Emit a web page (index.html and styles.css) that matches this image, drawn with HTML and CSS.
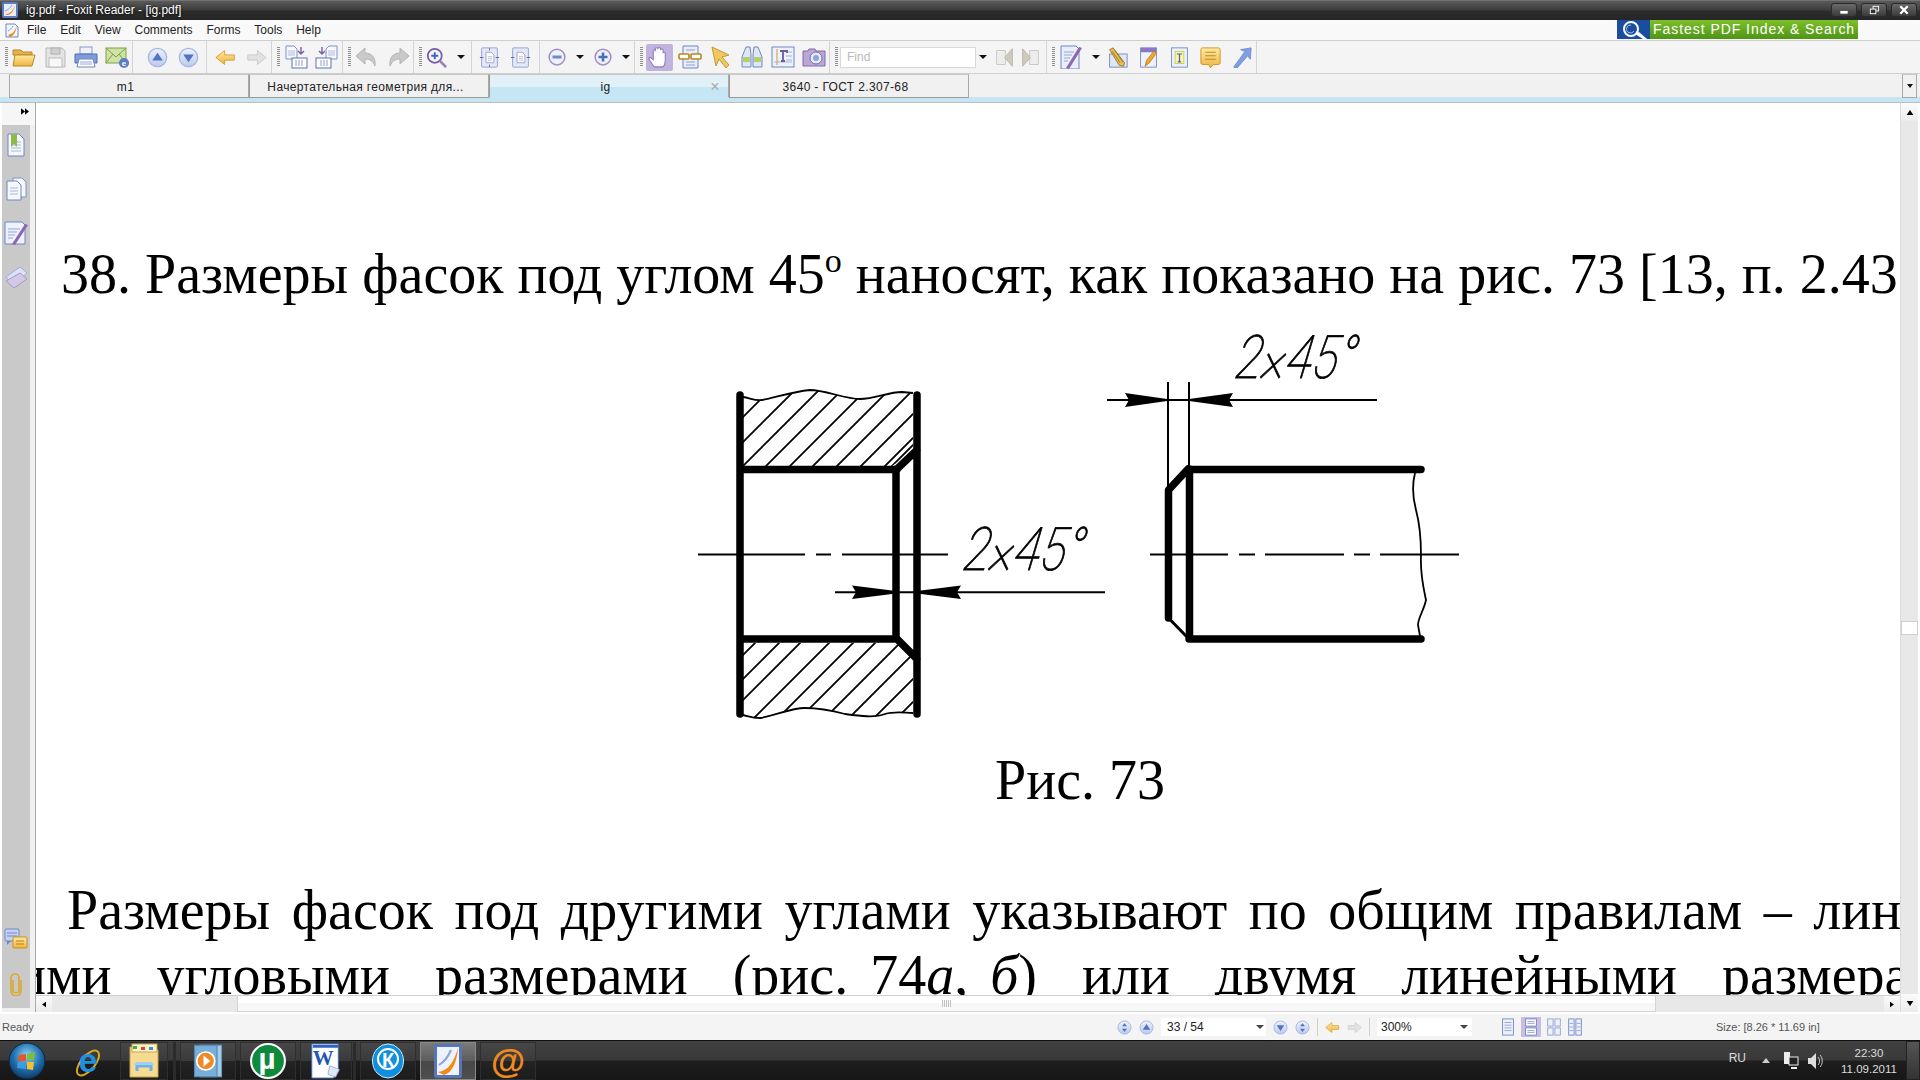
FILE: index.html
```html
<!DOCTYPE html>
<html lang="ru">
<head>
<meta charset="utf-8">
<title>ig.pdf - Foxit Reader - [ig.pdf]</title>
<link rel="stylesheet" href="styles.css">
</head>
<body>
<svg class="defs" width="0" height="0" aria-hidden="true">
  <defs>
    <linearGradient id="gBlue" x1="0" y1="0" x2="0" y2="1"><stop offset="0" stop-color="#eef2fb"/><stop offset="1" stop-color="#bcc9ee"/></linearGradient>
    <linearGradient id="gYel" x1="0" y1="0" x2="0" y2="1"><stop offset="0" stop-color="#ffe9a0"/><stop offset="1" stop-color="#eeb440"/></linearGradient>
    <radialGradient id="gOrb" cx=".5" cy=".35" r=".7"><stop offset="0" stop-color="#8fd4f5"/><stop offset=".55" stop-color="#1f6fae"/><stop offset="1" stop-color="#0a2f55"/></radialGradient>
    <g id="doc"><path d="M4 1h11l5 5v17H4z" fill="#f6f8fe" stroke="#6f86c4"/><path d="M7 9h10M7 12h10M7 15h10M7 18h10" stroke="#a9b6dc"/></g>
    <g id="round"><circle cx="12" cy="12" r="10.5" fill="url(#gBlue)" stroke="#a9b8e6" stroke-width="1.5"/></g>
    <g id="up"><use href="#round"/><path d="M12 6.5l6 9H6z" fill="#4f75bf"/></g>
    <g id="down"><use href="#round"/><path d="M12 17.5l6-9H6z" fill="#4f75bf"/></g>
    <g id="first"><use href="#round"/><path d="M12 5l4 5H8zM12 19l4-5H8z" fill="#4f75bf"/></g>
    <g id="fit"><rect x="3" y="1" width="18" height="22" rx="1" fill="#e4e9f8" stroke="#8b9bd0"/><path d="M8 6h6l3 3v9H8z" fill="#fff" stroke="#8f9fc9"/><path d="M10 11h5M10 13h5M10 15h5" stroke="#b5bfdc"/><path d="M1 12h4M23 12h-4" stroke="#7a5ca8" stroke-width="1.4"/></g>
    <g id="lefty"><path d="M1 12l10-8v5h11v6H11v5z"/></g>
    <g id="pgarrow"><path d="M2 1h8l3 3v10H2z" fill="#f6f8fe" stroke="#7e92c8"/><path d="M4 6h7M4 8h7M4 10h7" stroke="#b3bfe0"/><rect x="8" y="13" width="15" height="10" fill="#fff" stroke="#5b72b5"/><path d="M12 15v6M15 15v6M18 15v6" stroke="#8c9cc9"/></g>
  </defs>
</svg>

<div class="app">
  <header class="titlebar">
    <svg class="ti-logo" viewBox="0 0 16 16"><rect width="16" height="16" rx="2" fill="#5d7ac4"/><rect x="2" y="2" width="12" height="12" fill="#e8eefc"/><path d="M3 12c5 0 8-3 10-9-1 6-4 10-8 10z" fill="#f08a12"/><path d="M3 9c3-1 5-3 7-6" stroke="#8aa3dc" fill="none"/></svg>
    <span class="ti-text">ig.pdf - Foxit Reader - [ig.pdf]</span>
    <div class="winbtns">
      <span class="winbtn"><svg viewBox="0 0 26 12"><rect x="9" y="7" width="8" height="3" fill="#fff"/></svg></span>
      <span class="winbtn"><svg viewBox="0 0 26 12"><rect x="12" y="2" width="6" height="5" fill="none" stroke="#fff"/><rect x="9" y="5" width="6" height="5" fill="#333" stroke="#fff"/></svg></span>
      <span class="winbtn"><svg viewBox="0 0 26 12"><path d="M9 2l8 8M17 2l-8 8" stroke="#fff" stroke-width="2.4"/></svg></span>
    </div>
  </header>

  <nav class="menubar">
    <svg class="mn-logo" viewBox="0 0 14 16"><path d="M1 2h9l3 3v10H1z" fill="#f2f5fd" stroke="#6f86c4"/><path d="M3 13c5-1 7-4 9-10-1 6-3 11-7 12z" fill="#f08a12"/><path d="M3 9c2-1 4-3 5-5" stroke="#8aa3dc" fill="none"/></svg>
    <span class="mn">File</span><span class="mn">Edit</span><span class="mn">View</span><span class="mn">Comments</span><span class="mn">Forms</span><span class="mn">Tools</span><span class="mn">Help</span>
    <div class="banner">
      <span class="bn-ic"><svg viewBox="0 0 33 19"><rect width="33" height="19" fill="#1a4da0"/><circle cx="14" cy="9" r="7" fill="none" stroke="#fff" stroke-width="2"/><path d="M18 14l8 5h4l-8-7z" fill="#fff"/><path d="M14 5a4 4 0 1 0 3 6" fill="none" stroke="#9cc4f2"/></svg></span>
      <span class="bn-tx">Fastest PDF Index &amp; Search</span>
    </div>
  </nav>

  <div class="toolbar">
    <div class="grp g1"><i class="grip"></i>
      <svg class="ic" viewBox="0 0 24 24"><path d="M1 5h8l2 2h9v3H1z" fill="#e3b24a" stroke="#b78a2a"/><path d="M3 10h20l-3 11H1z" fill="url(#gYel)" stroke="#b78a2a"/></svg>
      <svg class="ic" viewBox="0 0 24 24"><path d="M3 3h16l3 3v16H3z" fill="#e4e4e4" stroke="#b9b9b9"/><rect x="8" y="3" width="9" height="6" fill="#cfcfcf" stroke="#b0b0b0"/><rect x="6" y="13" width="13" height="9" fill="#f8f8f8" stroke="#bdbdbd"/></svg>
      <svg class="ic" viewBox="0 0 24 24"><rect x="6" y="2" width="12" height="7" fill="#eef1fa" stroke="#8898c8"/><path d="M1 9h22v9H1z" fill="#7f9bd8" stroke="#4e6fb5"/><path d="M5 14h14l2 8H3z" fill="#fff" stroke="#6f86c4"/><path d="M6 17h12M6 19h12" stroke="#9aa9d2"/></svg>
      <svg class="ic" viewBox="0 0 24 24"><rect x="1" y="3" width="20" height="15" fill="#cfe3a6" stroke="#7fa044"/><path d="M1 3l10 9 10-9M1 18l7-9M21 18l-7-9" fill="none" stroke="#7fa044"/><circle cx="19" cy="18" r="5" fill="#5b7cc8"/><text class="ic-e" x="19" y="21">e</text></svg>
    </div>
    <div class="grp g2">
      <svg class="ic ic21" viewBox="0 0 24 24"><use href="#up"/></svg>
      <svg class="ic ic21" viewBox="0 0 24 24"><use href="#down"/></svg>
    </div>
    <div class="grp g3">
      <svg class="ic ic21" viewBox="0 0 24 24"><use href="#lefty" fill="url(#gYel)" stroke="#d19b2e"/></svg>
      <svg class="ic ic21 flip" viewBox="0 0 24 24"><use href="#lefty" fill="#e2e2e2" stroke="#c8c8c8"/></svg>
    </div>
    <div class="grp g4"><i class="grip"></i>
      <svg class="ic" viewBox="0 0 24 24"><use href="#pgarrow"/><path d="M17 2v7M14 6l3 3 3-3" fill="none" stroke="#7a5ca8" stroke-width="1.4"/></svg>
      <svg class="ic flip" viewBox="0 0 24 24"><use href="#pgarrow"/><path d="M17 2v7M14 6l3 3 3-3" fill="none" stroke="#7a5ca8" stroke-width="1.4"/></svg>
    </div>
    <div class="grp g5"><i class="grip"></i>
      <svg class="ic" viewBox="0 0 24 24"><path d="M10 3L1 11l9 8v-5c5 0 8 2 10 7 1-8-3-13-10-13z" fill="#c9c9c9" stroke="#b4b4b4"/></svg>
      <svg class="ic flip" viewBox="0 0 24 24"><path d="M10 3L1 11l9 8v-5c5 0 8 2 10 7 1-8-3-13-10-13z" fill="#c9c9c9" stroke="#b4b4b4"/></svg>
    </div>
    <div class="grp g6"><i class="grip"></i>
      <svg class="ic ic21" viewBox="0 0 24 24"><circle cx="10" cy="10" r="8" fill="#f4f6fd" stroke="#7a5ca8" stroke-width="2"/><path d="M6 10h8M10 6v8" stroke="#3f66b5" stroke-width="2.2"/><path d="M16 16l7 7" stroke="#9a7fc2" stroke-width="3"/></svg>
      <i class="drop"></i>
    </div>
    <div class="grp g7">
      <svg class="ic ic21" viewBox="0 0 24 24"><use href="#fit"/><path d="M12 1v3M12 23v-3" stroke="#7a5ca8"/></svg>
      <svg class="ic ic21" viewBox="0 0 24 24"><use href="#fit"/></svg>
    </div>
    <div class="grp g8">
      <svg class="ic ic18" viewBox="0 0 24 24"><circle cx="12" cy="12" r="10.5" fill="#eef0fa" stroke="#a38cc8" stroke-width="2"/><rect x="6" y="10" width="12" height="4" fill="#6a8ac8"/></svg><i class="drop"></i>
      <svg class="ic ic18" viewBox="0 0 24 24"><circle cx="12" cy="12" r="10.5" fill="#eef0fa" stroke="#a38cc8" stroke-width="2"/><path d="M6 12h12M12 6v12" stroke="#466fbd" stroke-width="3.4"/></svg><i class="drop"></i>
    </div>
    <div class="grp g9"><i class="grip"></i>
      <span class="hand"><svg viewBox="0 0 24 24"><path d="M7 21c-2-3-5-6-5-8s2-1 4 1V6c0-1.800 2-1.800 2 0V4c0-1.800 2.500-1.800 2.500 0V3.500c0-1.600 2.500-1.600 2.500 0V5c0-1.600 2.500-1.600 2.500 0v3c0-1.500 2-1.500 2 0v7c0 3-1 5-2 6z" fill="#fff" stroke="#8a7ab5"/></svg></span>
      <svg class="ic" viewBox="0 0 24 24"><path d="M5 1h15v22H5z" fill="#e9eefb" stroke="#6f86c4"/><path d="M8 5h9M8 17h9M8 20h9" stroke="#8fa0d0"/><rect x="1" y="9" width="10" height="5" rx="1" fill="#fff" stroke="#b8861c" stroke-width="1.6"/><rect x="13" y="9" width="10" height="5" rx="1" fill="#fff" stroke="#b8861c" stroke-width="1.6"/></svg>
      <svg class="ic" viewBox="0 0 24 24"><path d="M3 2l17 8-7 2 7 8-3 3-7-9-3 7z" fill="#efc860" stroke="#c49a34"/></svg>
      <svg class="ic" viewBox="0 0 24 24"><path d="M6 2h4l1 8v12H2V12z" fill="#dfe7f7" stroke="#6f86c4"/><path d="M14 2h4l4 10v10h-9V10z" fill="#dfe7f7" stroke="#6f86c4"/><rect x="3" y="12" width="7" height="5" fill="#b5cf6a"/><rect x="14" y="12" width="7" height="5" fill="#b5cf6a"/></svg>
      <svg class="ic" viewBox="0 0 24 24"><rect x="1" y="2" width="22" height="20" fill="#eef2fc" stroke="#6f86c4"/><path d="M15 7h6M15 11h6M15 15h6M3 17h18" stroke="#a5b3dc"/><path d="M9 6h7v2M12 6v10M10 16h4" fill="none" stroke="#6a5aa8" stroke-width="1.8"/><path d="M6 4v16" stroke="#c89f2a"/></svg>
      <svg class="ic" viewBox="0 0 24 24"><path d="M1 6h5l1-2h6l1 2h9v15H1z" fill="#b9a7d8" stroke="#7f6aa9"/><circle cx="14" cy="13" r="6" fill="#e6ecfb" stroke="#7f6aa9"/><circle cx="14" cy="13" r="3" fill="#8aa5e0"/></svg>
    </div>
    <div class="grp g10"><i class="grip"></i>
      <span class="findbox">Find</span><i class="drop"></i>
      <svg class="ic ic21" viewBox="0 0 24 24"><path d="M3 4h10v16H3z" fill="#ededed" stroke="#c4c4c4"/><path d="M21 2v20l-9-10z" fill="#cfcabb" stroke="#b8b4a6"/></svg>
      <svg class="ic ic21 flip" viewBox="0 0 24 24"><path d="M3 4h10v16H3z" fill="#ededed" stroke="#c4c4c4"/><path d="M21 2v20l-9-10z" fill="#cfcabb" stroke="#b8b4a6"/></svg>
    </div>
    <div class="grp g11"><i class="grip"></i>
      <svg class="ic" viewBox="0 0 24 24"><path d="M2 1h15l3 3v20H2z" fill="#e9eefb" stroke="#6f86c4"/><path d="M5 7h10M5 10h8M5 13h6M5 16h4" stroke="#94a5d4"/><path d="M7 23L20 2l3 1L10 24z" fill="#8c68b0"/></svg><i class="drop"></i>
      <svg class="ic ic21" viewBox="0 0 24 24"><rect x="3" y="8" width="20" height="15" fill="#dfe6f8" stroke="#6f86c4"/><path d="M3 3l4-2 13 17-1 4-5-1z" fill="#e6bc55" stroke="#9b7320"/><path d="M6 5l9 13M9 4l9 13" stroke="#9b7320"/></svg>
      <svg class="ic ic21" viewBox="0 0 24 24"><rect x="3" y="1" width="18" height="22" fill="#eef2fc" stroke="#6f86c4"/><rect x="3" y="1" width="18" height="5" fill="#8a78c0"/><path d="M8 22l2-7 8-10 3 2-8 11z" fill="#f0a830" stroke="#c47c10"/></svg>
      <svg class="ic ic21" viewBox="0 0 24 24"><rect x="3" y="1" width="18" height="22" fill="#eef2fc" stroke="#6f86c4"/><rect x="7" y="5" width="10" height="14" fill="#f7f7a8" stroke="#c8c858"/><path d="M9 8h6M12 8v9M10 17h4" stroke="#5a5ab0" stroke-width="1.4" fill="none"/></svg>
      <svg class="ic ic21" viewBox="0 0 24 24"><path d="M3 1h18a2 2 0 0 1 2 2v15a2 2 0 0 1-2 2h-6l-3 4-2-4H3a2 2 0 0 1-2-2V3a2 2 0 0 1 2-2z" fill="url(#gYel)" stroke="#c8911c"/><path d="M6 6h12M6 10h12M6 14h12" stroke="#b5811a"/></svg>
      <svg class="ic ic21" viewBox="0 0 24 24"><path d="M3 23L16 5l-5-2 12-2-1 13-3-4L7 24z" fill="#7e9fe2" stroke="#6a8bd2"/></svg>
    </div>
  </div>

  <div class="tabbar">
    <div class="tab">m1</div>
    <div class="tab">Начертательная геометрия для...</div>
    <div class="tab tab-on"><span>ig</span><i class="tab-x">×</i></div>
    <div class="tab">3640 - ГОСТ 2.307-68</div>
    <div class="tab-menu"><i class="drop"></i></div>
  </div>

  <main class="main">
    <aside class="sidebar">
      <div class="sb-top"><svg class="sb-ff" viewBox="0 0 10 8"><path d="M0 0l5 4-5 4zM5 0l5 4-5 4z"/></svg></div>
      <div class="sb-icons">
        <svg class="sb-ic" viewBox="0 0 24 24"><use href="#doc"/><path d="M7 1h6v13l-3-3-3 3z" fill="#8cbb4a"/></svg>
        <svg class="sb-ic" viewBox="0 0 24 24"><path d="M9 1h9l4 4v15H9z" fill="#f6f8fe" stroke="#7e92c8"/><path d="M3 4h10l4 4v15H3z" fill="#f6f8fe" stroke="#6f86c4"/><path d="M6 11h8M6 14h8M6 17h8" stroke="#a9b6dc"/></svg>
        <svg class="sb-ic" viewBox="0 0 24 24"><path d="M1 1h17l3 3v19H1z" fill="#eef2fc" stroke="#6f86c4"/><path d="M4 8h12M4 11h9M4 14h7M4 17h5" stroke="#94a5d4"/><path d="M8 23L21 3l3 1L11 24z" fill="#8c68b0"/></svg>
        <svg class="sb-ic" viewBox="0 0 24 24"><path d="M2 12L16 2l7 6L10 20z" fill="#dbe3f7" stroke="#9fb0dc"/><path d="M2 16l14-8 7 6-13 9z" fill="#d3c8e6" stroke="#a896cc"/></svg>
        <span class="sb-gap"></span>
        <svg class="sb-ic" viewBox="0 0 24 24"><rect x="1" y="1" width="14" height="12" rx="1" fill="#c4d2f2" stroke="#6f86c4"/><path d="M3 5h10M3 8h10" stroke="#6f86c4"/><path d="M3 13v4l4-4z" fill="#6f86c4"/><rect x="9" y="9" width="14" height="11" rx="1" fill="url(#gYel)" stroke="#c8911c"/><path d="M12 13h8M12 16h8" stroke="#b5811a"/></svg>
        <svg class="sb-ic" viewBox="0 0 24 24"><path d="M9 8v10a3 3 0 0 0 6 0V6a4 4 0 0 0-8 0v13a5 5 0 0 0 10 0V8" fill="none" stroke="#d9a92c" stroke-width="1.6"/></svg>
      </div>
    </aside>

    <div class="center">
      <section class="page">
        <p class="ln l1">38. Размеры фасок под углом 45<sup>о</sup> наносят, как показано на рис. 73 [13, п. 2.43</p>
        <svg class="fig" viewBox="680 320 800 410">
          <defs>
            <clipPath id="hTop"><path d="M743 397C750 398 755 401 762 400C775 398 790 392 810 390C825 390 845 399 860 399C875 399 888 392 902 392L913 393V452L892 466H743Z"/></clipPath>
            <clipPath id="hBot"><path d="M743 643H897L913 660V713C905 713 895 711 885 714C875 718 860 716 845 714C830 710 820 708 805 708C790 708 775 716 760 718C752 718 748 716 743 715Z"/></clipPath>
          </defs>
          <g class="thin" clip-path="url(#hTop)">
            <path d="M690 470L780 380M715 470L805 380M739 470L829 380M762 470L852 380M786 470L876 380M809 470L899 380M833 470L923 380M857 470L947 380M881 470L971 380M888 470L978 380"/>
          </g>
          <g class="thin" clip-path="url(#hBot)">
            <path d="M668 730L758 640M692 730L782 640M713 730L803 640M742 730L832 640M766 730L856 640M788 730L878 640M813 730L903 640M837 730L927 640M862 730L952 640M885 730L975 640"/>
          </g>
          <path class="wave" d="M743 397C750 398 755 401 762 400C775 398 790 392 810 390C825 390 845 399 860 399C875 399 888 392 902 392L913 393"/>
          <path class="wave" d="M743 715C748 716 752 718 760 718C775 716 790 708 805 708C820 708 830 710 845 714C860 716 875 718 885 714C895 711 905 713 913 713"/>
          <path class="thick" d="M740 395V714M917 395V714M740 469.500H897M740 639H897M896 469V639M897 469L917 450M897 639L917 659"/>
          <path class="center-l" d="M698 554.500H805M816 554.500H831M842 554.500H948"/>
          <path class="thin dim" d="M835 592.300H1105"/>
          <path d="M896 591L852 585.500L856 592.300L852 599L896 593.500ZM917 591L961 585.500L957 592.300L961 599L917 593.500Z"/>
          <text class="dimtx" x="960" y="570" textLength="120" lengthAdjust="spacingAndGlyphs">2×45°</text>

          <path class="thin dim" d="M1107 400H1377M1168 382V490M1189 382V470"/>
          <path d="M1167 399L1125 393L1129 400L1125 407L1167 401ZM1189 399L1233 393L1229 400L1233 407L1189 401Z"/>
          <path class="thick" d="M1189 469.500H1421M1189 639H1421M1189.500 469V639M1188 469L1168.500 490V618"/>
          <path class="med" d="M1168.500 618L1189 639"/>
          <path class="wave" d="M1415 473C1412 485 1412 495 1416 510C1420 525 1421 540 1421 555C1420 575 1424 590 1426 600C1424 610 1418 618 1418 625L1420 636"/>
          <path class="center-l" d="M1150 554.500H1228M1239 554.500H1255M1265 554.500H1344M1354 554.500H1370M1380 554.500H1459"/>
          <text class="dimtx" x="1232" y="378" textLength="120" lengthAdjust="spacingAndGlyphs">2×45°</text>
        </svg>
        <p class="ln cap">Рис. 73</p>
        <p class="ln l3">Размеры фасок под другими углами указывают по общим правилам – лин</p>
        <p class="ln l4">ими угловыми размерами <span class="tight">(рис. 74<em>а</em>, <em>б</em>)</span> или двумя линейными размера.</p>
      </section>
      <div class="hscroll">
        <span class="sc-btn"><svg viewBox="0 0 6 8"><path d="M6 0v8L0 4z"/></svg></span>
        <span class="sc-track-l"></span>
        <span class="sc-thumb"><i class="sc-grip"></i></span>
        <span class="sc-track-r"></span>
        <span class="sc-btn"><svg viewBox="0 0 6 8"><path d="M0 0v8l6-4z"/></svg></span>
      </div>
    </div>

    <aside class="vscroll">
      <span class="v-btn"><svg viewBox="0 0 8 6"><path d="M0 6h8L4 0z"/></svg></span>
      <span class="v-track"></span>
      <span class="v-thumb"></span>
      <span class="v-track v-track2"></span>
      <span class="v-btn"><svg viewBox="0 0 8 6"><path d="M0 0h8L4 6z"/></svg></span>
    </aside>
  </main>

  <footer class="status">
    <span class="st-ready">Ready</span>
    <div class="st-nav">
      <svg class="st-ic" viewBox="0 0 24 24"><use href="#first"/></svg>
      <svg class="st-ic" viewBox="0 0 24 24"><use href="#up"/></svg>
      <span class="st-box st-page">33 / 54<i class="drop"></i></span>
      <svg class="st-ic" viewBox="0 0 24 24"><use href="#down"/></svg>
      <svg class="st-ic" viewBox="0 0 24 24"><use href="#first"/></svg>
      <i class="st-sep"></i>
      <svg class="st-ic" viewBox="0 0 24 24"><use href="#lefty" fill="url(#gYel)" stroke="#d19b2e"/></svg>
      <svg class="st-ic flip" viewBox="0 0 24 24"><use href="#lefty" fill="#e2e2e2" stroke="#c8c8c8"/></svg>
      <i class="st-sep"></i>
      <span class="st-box st-zoom">300%<i class="drop"></i></span>
    </div>
    <div class="st-views">
      <svg class="st-v" viewBox="0 0 16 20"><rect x="2" y="1" width="12" height="18" fill="#eef2fc" stroke="#6f86c4"/><path d="M4 5h8M4 8h8M4 11h8M4 14h8" stroke="#8fa0d0"/></svg>
      <span class="st-v-on"><svg viewBox="0 0 16 20"><rect x="2" y="1" width="12" height="8" fill="#fff" stroke="#6f86c4"/><rect x="2" y="11" width="12" height="8" fill="#fff" stroke="#6f86c4"/><path d="M4 4h8M4 6h8M4 14h8M4 16h8" stroke="#8fa0d0"/></svg></span>
      <svg class="st-v" viewBox="0 0 16 20"><rect x="1" y="1" width="6" height="8" fill="#eef2fc" stroke="#8fa0d0"/><rect x="9" y="1" width="6" height="8" fill="#eef2fc" stroke="#8fa0d0"/><rect x="1" y="11" width="6" height="8" fill="#eef2fc" stroke="#8fa0d0"/><rect x="9" y="11" width="6" height="8" fill="#eef2fc" stroke="#8fa0d0"/></svg>
      <svg class="st-v" viewBox="0 0 16 20"><rect x="1" y="1" width="6" height="18" fill="#eef2fc" stroke="#6f86c4"/><rect x="9" y="1" width="6" height="18" fill="#eef2fc" stroke="#6f86c4"/><path d="M2 6h4M2 10h4M2 14h4M10 6h4M10 10h4M10 14h4" stroke="#8fa0d0"/></svg>
    </div>
    <span class="st-size">Size: [8.26 * 11.69 in]</span>
  </footer>

  <div class="taskbar">
    <svg class="orb" viewBox="0 0 38 38"><circle cx="19" cy="19" r="18" fill="url(#gOrb)" stroke="#0c2238"/><path d="M11 13l7-1v7h-8z" fill="#e8552b"/><path d="M19 12l8-2-1 8h-7z" fill="#7cbf3a"/><path d="M10 20h8v7l-9-1z" fill="#3f9be0"/><path d="M19 20h7l-1 8-6-1z" fill="#f6c02f"/></svg>
    <span class="tk tk-plain"><svg viewBox="0 0 32 36"><ellipse cx="16" cy="20" rx="15" ry="7" transform="rotate(-50 16 20)" fill="none" stroke="#d8a820" stroke-width="2"/><text class="tk-e" x="16" y="29">e</text></svg></span>
    <span class="tk tk-ex"><svg viewBox="0 0 34 36"><path d="M3 4h11l2 3h15v27H3z" fill="#f5dc92" stroke="#c9a24a"/><rect x="5" y="1" width="25" height="8" fill="#fff4c8" stroke="#c9a24a"/><rect x="6" y="3" width="4" height="3" fill="#3ab24a"/><rect x="14" y="4" width="4" height="3" fill="#d8443a"/><rect x="22" y="4" width="4" height="3" fill="#3f8ae0"/><path d="M10 28v-5h14v5" fill="none" stroke="#6fb2e6" stroke-width="3"/><path d="M7 22h20l-2-3H9z" fill="#9fd0ef"/></svg></span>
    <i class="tk-sep"></i>
    <span class="tk"><svg viewBox="0 0 28 32"><rect x="7" y="2" width="19" height="28" fill="#a6cbe8" stroke="#6b9cc4"/><rect x="2" y="2" width="20" height="28" fill="#7aaed8" stroke="#4f87b4"/><circle cx="12" cy="16" r="8" fill="#f08a24" stroke="#fff" stroke-width="1.5"/><path d="M10 11l6 5-6 5z" fill="#fff"/></svg></span>
    <span class="tk"><svg viewBox="0 0 34 34"><circle cx="17" cy="17" r="16" fill="#0d8a3c" stroke="#fff" stroke-width="2"/><text class="tk-mu" x="16" y="25">µ</text></svg></span>
    <span class="tk tk-w"><svg viewBox="0 0 32 38"><path d="M1 1h28v28l-5 8H1z" fill="#fff" stroke="#3f6fc4"/><rect x="2" y="2" width="27" height="3" fill="#2f62c0"/><text class="tk-wd" x="13" y="23">W</text><path d="M20 24l10 4-4 8-8-3z" fill="#dfe8f7" stroke="#9fb4d8"/></svg></span>
    <i class="tk-sep"></i>
    <span class="tk"><svg viewBox="0 0 34 36"><ellipse cx="17" cy="18" rx="15.500" ry="17" fill="#0f8fdc" stroke="#cfe9fa"/><circle cx="17" cy="16" r="10" fill="none" stroke="#fff" stroke-width="2"/><text class="tk-k" x="17" y="24">К</text></svg></span>
    <span class="tk tk-on"><svg viewBox="0 0 30 36"><rect x="1" y="1" width="28" height="34" rx="2" fill="#5875b8"/><rect x="4" y="4" width="22" height="28" fill="#eef2fc"/><path d="M5 29c10-1 16-10 20-24-1 14-6 25-14 27z" fill="#f08a12"/><path d="M6 22c5-3 9-8 12-15" stroke="#8aa3dc" stroke-width="2" fill="none"/></svg></span>
    <span class="tk"><svg viewBox="0 0 34 34"><text class="tk-at" x="17" y="28">@</text></svg></span>
    <div class="tray">
      <span class="tr-lang">RU</span>
      <svg class="tr-up" viewBox="0 0 8 5"><path d="M0 5h8L4 0z"/></svg>
      <svg class="tr-net" viewBox="0 0 16 20"><rect x="1" y="1" width="6" height="12" fill="#eee"/><rect x="6" y="6" width="9" height="8" fill="#222" stroke="#eee"/><path d="M8 17h6" stroke="#eee" stroke-width="2"/></svg>
      <svg class="tr-vol" viewBox="0 0 16 20"><path d="M1 7h3l5-5v16l-5-5H1z" fill="#ddd"/><path d="M11 6c2 2 2 6 0 8M13 4c3 3 3 9 0 12" stroke="#ccc" fill="none"/></svg>
      <div class="tr-clock"><span>22:30</span><span>11.09.2011</span></div>
      <span class="tr-show"></span>
    </div>
  </div>
</div>
</body>
</html>
```
FILE: styles.css
```css
* { box-sizing: border-box; }
html, body { margin: 0; padding: 0; }
body { font-family: "Liberation Sans", Arial, sans-serif; font-size: 12px; color: #222; overflow: hidden; }
.defs { position: absolute; }
svg { display: block; flex: none; }
i { font-style: normal; display: block; }
.flip { transform: scaleX(-1); }
.app { width: 1920px; height: 1080px; display: flex; flex-direction: column; overflow: hidden; background: #f4f4f4; }

/* title */
.titlebar { height: 20px; flex: none; display: flex; align-items: center; padding-left: 2px; color: #fff;
  background: linear-gradient(#8a8a8a 0, #5a5a5a 1px, #4a4a4a 6px, #3c3c3c 10px, #2c2c2c 11px, #262626 20px); }
.ti-logo { width: 16px; height: 16px; }
.ti-text { margin-left: 8px; font-size: 12px; text-shadow: 0 0 3px #000; }
.winbtns { margin-left: auto; display: flex; gap: 4px; padding-right: 3px; }
.winbtn { width: 26px; height: 14px; border-radius: 3px; border: 1px solid #2a2a2a; background: linear-gradient(#6a6a6a, #3a3a3a); display: block; }
.winbtn svg { width: 24px; height: 12px; }

/* menu */
.menubar { height: 20px; flex: none; display: flex; align-items: center; background: #f9f9f9; padding-left: 5px; }
.mn-logo { width: 14px; height: 16px; margin-right: 8px; }
.mn { margin-right: 13.900px; color: #222; }
.banner { margin-left: auto; margin-right: 62px; width: 241px; height: 19px; display: flex; align-self: flex-start; }
.bn-ic, .bn-ic svg { width: 33px; height: 19px; display: block; }
.bn-tx { flex: 1; background: linear-gradient(#7cc02a, #4f9416); color: #fff; font-size: 14px; letter-spacing: .95px; line-height: 19px; padding-left: 3px; white-space: nowrap; overflow: hidden; }

/* toolbar */
.toolbar { height: 34px; flex: none; display: flex; background: #f4f4f4; border-top: 1px solid #cfcfcf; border-bottom: 1px solid #cfcfcf; }
.grp { display: flex; align-items: center; height: 32px; padding-left: 8px; border-right: 1px solid #d4d4d4; gap: 7px; flex: none; }
.grip { width: 3px; height: 20px; margin-right: -1px; background: repeating-linear-gradient(#8f8f8f 0 1px, #f4f4f4 1px 2px); }
.g1 { width: 133px; padding-left: 5px; } .g1 .grip { margin-right: -3px; }
.g2 { width: 74px; padding-left: 14px; gap: 10px; }
.g3 { width: 65px; padding-left: 8px; gap: 10px; }
.g4 { width: 71px; padding-left: 5px; gap: 7px; } .g4 .grip { margin-right: -3px; }
.g5 { width: 71px; padding-left: 5px; gap: 7px; } .g5 .grip { margin-right: -3px; }
.g6 { width: 58px; padding-left: 5px; gap: 5px; } .g6 .drop { margin-left: 5px; }
.g7 { width: 68px; padding-left: 7px; gap: 10px; }
.g8 { width: 95px; padding-left: 8px; gap: 10px; }
.g9 { width: 195px; padding-left: 5px; gap: 7px; } .g9 .grip { margin-right: -4px; } .g9 .hand { margin-right: -2px; }
.g10 { width: 217px; padding-left: 5px; gap: 5px; } .g10 .grip { margin-right: -3px; } .g10 .drop { margin-left: -2px; margin-right: 2px; }
.g11 { width: 210px; padding-left: 5px; gap: 10px; } .g11 .grip { margin-right: -6px; } .g11 .drop { margin-left: -1px; margin-right: -3px; }
.ic { width: 24px; height: 24px; }
.ic21 { width: 21px; height: 21px; }
.ic18 { width: 18px; height: 18px; }
.ic-e { font: bold 8px "Liberation Sans", sans-serif; fill: #fff; text-anchor: middle; }
.drop { width: 0; height: 0; border-left: 4px solid transparent; border-right: 4px solid transparent; border-top: 4px solid #111; flex: none; }
.hand { width: 27px; height: 27px; background: #c0b3dd; border-radius: 2px; display: block; padding: 1px; flex: none; }
.hand svg { width: 25px; height: 25px; }
.findbox { width: 136px; height: 21px; background: #fff; border: 1px solid #d8d8d8; color: #b9b9b9; font-size: 12px; line-height: 19px; padding-left: 6px; display: block; flex: none; }

/* tabs */
.tabbar { height: 28px; flex: none; display: flex; padding-left: 9px; background: #f1f1f1; border-bottom: 4px solid #c7e4f2; box-shadow: inset 0 -1px 0 #c7e4f2; position: relative; }
.tab { width: 240px; height: 24px; border: 1px solid #a8a8a8; border-bottom-color: #9a9a9a; border-top-color: #c8c8c8; background: #f1f1f1; display: flex; align-items: center; justify-content: center; color: #222; font-size: 12px; letter-spacing: .35px; padding: 2px 7px 0 0; position: relative; }
.tab + .tab { border-left-color: #9a9a9a; }
.tab-on { background: linear-gradient(#e2f0f7 0 12px, #c7e6f5 12px); border-bottom-color: #c7e6f5; }
.tab-x { position: absolute; right: 8px; top: 3px; font-size: 16px; line-height: 18px; color: #aaa; }
.tab-menu { margin-left: auto; margin-right: 3px; width: 15px; height: 24px; border: 1px solid #a8a8a8; border-top-color: #c8c8c8; display: flex; align-items: center; justify-content: center; }
.tab-menu .drop { border-left-width: 3px; border-right-width: 3px; }

/* main */
.main { flex: 1; min-height: 0; display: flex; border-top: 1px solid #bdbdbd; background: #fff; }
.sidebar { width: 36px; flex: none; display: flex; flex-direction: column; background: #f0f0f0; border-right: 1px solid #a9a9a9; padding-left: 2px; padding-right: 5px; box-shadow: inset 2px 0 0 #fff; }
.sb-top { height: 22px; flex: none; background: #f6f6f6; margin-right: -5px; padding: 5px 0 0 19px; }
.sb-ff { width: 8px; height: 7px; }
.sb-icons { flex: 1; background: #c9c9c9; display: flex; flex-direction: column; align-items: center; padding: 8px 0 12px; gap: 20px; margin-bottom: 4px; }
.sb-ic { width: 24px; height: 24px; }
.sb-gap { flex: 1; }
.center { flex: 1; min-width: 0; display: flex; flex-direction: column; }
.page { flex: 1; min-height: 0; overflow: hidden; background: #fff; padding-top: 141px; }
.ln { margin: 0; font-family: "Liberation Serif", "Times New Roman", serif; font-size: 56px; line-height: 60px; color: #000; white-space: nowrap; }
.l1 { padding-left: 25px; }
.l1 sup { font-size: 34px; line-height: 0; vertical-align: 21px; }
.fig { width: 800px; height: 410px; margin: 16px 0 0 644px; overflow: visible; }
.thin { fill: none; stroke: #000; stroke-width: 1.800; }
.dim { stroke-width: 2; }
.wave { fill: none; stroke: #000; stroke-width: 1.800; }
.thick { fill: none; stroke: #000; stroke-width: 7.500; stroke-linecap: round; stroke-linejoin: round; }
.med { fill: none; stroke: #000; stroke-width: 3; }
.center-l { fill: none; stroke: #000; stroke-width: 2.200; }
.dimtx { font-family: "Roboto", "Liberation Sans", sans-serif; font-weight: 100; font-style: italic; font-size: 60px; fill: #000; stroke: #000; stroke-width: .9; transform-box: fill-box; transform-origin: 0 100%; transform: skewX(-9deg); }
.cap { text-align: center; margin-top: 20px; padding-left: 224px; }
.l3 { margin-top: 70px; padding-left: 31px; word-spacing: 7.500px; }
.l4 { margin-top: 5px; margin-left: -20px; word-spacing: 31px; }
.l4 em { font-style: italic; }
.tight { word-spacing: 8px; }

/* h scroll */
.hscroll { height: 17px; flex: none; display: flex; border-top: 1px solid #cfcfcf; background: #e8e8e8; }
.sc-btn { width: 16px; display: flex; align-items: center; justify-content: center; background: linear-gradient(#fafafa, #ececec); flex: none; }
.sc-btn svg { width: 4px; height: 7px; }
.sc-track-l { width: 185px; flex: none; }
.sc-thumb { width: 1419px; flex: none; background: linear-gradient(#fff 0 7px, #f7f7f7 7px); border: 1px solid #d4d4d4; border-top: 0; display: flex; align-items: center; justify-content: center; }
.sc-grip { width: 9px; height: 7px; background: repeating-linear-gradient(90deg, #c0c0c0 0 1px, transparent 1px 2px); }
.sc-track-r { flex: 1; }

/* v scroll */
.vscroll { width: 20px; flex: none; display: flex; flex-direction: column; background: #fff; padding-right: 2px; border-left: 1px solid #dcdcdc; }
.v-btn { height: 18px; flex: none; display: flex; align-items: center; justify-content: center; background: linear-gradient(#fbfbfb, #ececec); }
.v-btn svg { width: 8px; height: 5px; }
.v-track { height: 500px; flex: none; background: #e8e8e8; }
.v-track2 { flex: 1; height: auto; }
.v-thumb { height: 14px; flex: none; background: #fff; border: 1px solid #cfcfcf; }

/* status */
.status { height: 28px; flex: none; display: flex; align-items: center; background: #f4f4f4; border-top: 2px solid #fff; padding-left: 2px; font-size: 11px; color: #555; position: relative; }
.st-ready { width: 1115px; flex: none; }
.st-nav { display: flex; align-items: center; gap: 7px; color: #222; font-size: 12px; }
.st-ic { width: 15px; height: 15px; }
.st-box { height: 18px; background: #fff; display: flex; align-items: center; justify-content: space-between; padding: 0 2px 0 6px; flex: none; }
.st-box .drop { border-top-color: #444; }
.st-page { width: 105px; }
.st-zoom { width: 95px; padding: 0 4px; }
.st-sep { width: 1px; height: 18px; background: #cfcfcf; }
.st-views { display: flex; align-items: center; gap: 5px; margin-left: 28px; }
.st-v { width: 16px; height: 18px; }
.st-v-on { width: 20px; height: 20px; background: #c9bde2; padding: 1px 2px; display: block; flex: none; }
.st-v-on svg { width: 16px; height: 18px; }
.st-size { margin-left: 133px; white-space: nowrap; color: #555; font-size: 11px; }

/* taskbar */
.taskbar { height: 40px; flex: none; display: flex; align-items: center; background: linear-gradient(#3f3f3f 0, #3a3a3a 19px, #1e1e1e 20px, #161616 40px); border-top: 1px solid #111; padding-left: 8px; }
.orb { width: 38px; height: 38px; }
.tk { width: 56px; height: 38px; margin-right: 4px; border: 1px solid #2f2f2f; background: linear-gradient(#474747, #3a3a3a 50%, #242424 50%, #1c1c1c); display: flex; align-items: center; justify-content: center; flex: none; }
.tk svg { width: 36px; height: 36px; }
.tk-plain { width: 46px; background: none; border-color: transparent; margin: 0 9px 0 19px; }
.tk-ex { width: 48px; }
.tk-w { width: 52px; margin-right: 0; }
.tk-sep { width: 3px; height: 38px; background: #2b2b2b; margin: 0 4px 0 1px; flex: none; }
.tk-on { background: linear-gradient(#7a7a7a, #5c5c5c 50%, #484848 50%, #4e4e4e); border-color: #8a8a8a; }
.tk-e { font: bold 34px "Liberation Sans", sans-serif; fill: #1f8fe0; text-anchor: middle; }
.tk-mu { font: bold 28px "Liberation Sans", sans-serif; fill: #fff; text-anchor: middle; }
.tk-wd { font: bold 22px "Liberation Serif", serif; fill: #1f56b8; text-anchor: middle; }
.tk-k { font: bold 20px "Liberation Sans", sans-serif; fill: #fff; text-anchor: middle; }
.tk-at { font: bold 33px "Liberation Sans", sans-serif; fill: #ee8a1e; text-anchor: middle; }
.tray { margin-left: auto; display: flex; align-items: center; height: 38px; color: #ddd; font-size: 12px; }
.tr-lang { margin-right: 16px; margin-top: -5px; }
.tr-up { width: 8px; height: 5px; fill: #ccc; margin-right: 13px; }
.tr-net { width: 16px; height: 20px; margin-right: 8px; }
.tr-vol { width: 16px; height: 20px; margin-right: 12px; }
.tr-clock { width: 68px; display: flex; flex-direction: column; align-items: center; gap: 4px; font-size: 11.500px; }
.tr-show { width: 14px; height: 39px; margin-left: 3px; background: linear-gradient(#555, #333); border: 1px solid #222; display: block; }
```
